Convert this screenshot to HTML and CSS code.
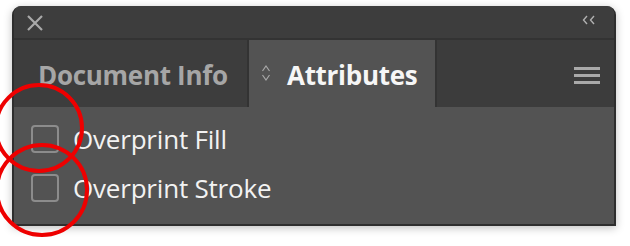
FILE: index.html
```html
<!DOCTYPE html>
<html lang="en">
<head>
    <meta charset="UTF-8">
    <title>Attributes Panel</title>
    <link rel="stylesheet" href="styles.css">
</head>
<body>
    <div class="panel">
        <div class="title-bar">
            <svg class="close-icon" width="16" height="16" viewBox="0 0 16 16">
                <path d="M1 1 L15 15 M15 1 L1 15" stroke="#a9a9a9" stroke-width="2.2" fill="none"/>
            </svg>
            <svg class="collapse-icon" width="14" height="10" viewBox="0 0 14 10">
                <path d="M5 1 L1.5 5 L5 9 M12 1 L8.5 5 L12 9" stroke="#b0b0b0" stroke-width="1.4" fill="none"/>
            </svg>
        </div>

        <div class="tab-row">
            <div class="tab">Document Info</div>
            <div class="tab active">
                <svg class="sort-icon" width="10" height="18" viewBox="0 0 10 18">
                    <path d="M1.5 7 L5 2 L8.5 7 M1.5 11 L5 16 L8.5 11" stroke="#a8a8a8" stroke-width="1.2" fill="none"/>
                </svg>
                Attributes
            </div>
            <div class="tab-spacer">
                <div class="menu-icon">
                    <span></span><span></span><span></span>
                </div>
            </div>
        </div>

        <div class="content">
            <label class="option"><span class="checkbox"></span>Overprint Fill</label>
            <label class="option"><span class="checkbox"></span>Overprint Stroke</label>
        </div>
    </div>

    <div class="mark mark-fill"></div>
    <div class="mark mark-stroke"></div>
</body>
</html>
```

FILE: styles.css
```css
body {
    margin: 0;
    padding: 6px 12px;
    background: #ffffff;
    font-family: "Open Sans", "Liberation Sans", sans-serif;
    position: relative;
    overflow: hidden;
    height: 246px;
    box-sizing: border-box;
}

.panel {
    width: 604px;
    height: 220px;
    background: #535353;
    border: 2px solid #2e2e2e;
    border-top: none;
    border-radius: 9px 9px 0 0;
    box-sizing: border-box;
    box-shadow: 0 2px 8px rgba(0, 0, 0, 0.25);
    overflow: hidden;
    display: flex;
    flex-direction: column;
}

.title-bar {
    height: 32px;
    background: #3d3d3d;
    border-bottom: 2px solid #333333;
    display: flex;
    align-items: center;
    justify-content: space-between;
    padding: 0 18px 0 13px;
    flex-shrink: 0;
}

.close-icon {
    margin-top: 2px;
}

.collapse-icon {
    margin-top: -4px;
}

.tab-row {
    height: 67px;
    display: flex;
    background: #3a3a3a;
    flex-shrink: 0;
}

.tab {
    display: flex;
    align-items: center;
    font-size: 26px;
    font-weight: 700;
    color: #a6a6a6;
    padding: 3px 10px 0 24px;
    width: 235px;
    box-sizing: border-box;
    background: #3d3d3d;
    border-right: 2px solid #333333;
    letter-spacing: -0.3px;
    white-space: nowrap;
}

.tab.active {
    width: 188px;
    background: #535353;
    color: #f6f6f6;
    border-right: 2px solid #333333;
    padding-left: 12px;
}

.sort-icon {
    margin-right: 16px;
    margin-top: -4px;
    flex-shrink: 0;
}

.tab-spacer {
    flex: 1;
    display: flex;
    align-items: center;
    justify-content: flex-end;
    padding-right: 14px;
    background: #3c3c3c;
}

.menu-icon {
    display: flex;
    flex-direction: column;
    gap: 4px;
    margin-top: 4px;
}

.menu-icon span {
    display: block;
    width: 26px;
    height: 3px;
    background: #a9a9a9;
}

.content {
    flex: 1;
    padding: 18px 0 0 17px;
    display: flex;
    flex-direction: column;
    gap: 21px;
}

.option {
    display: flex;
    align-items: center;
    font-size: 26px;
    color: #f2f2f2;
    height: 28px;
    letter-spacing: -0.2px;
}

.checkbox {
    width: 28px;
    height: 28px;
    box-sizing: border-box;
    border: 2px solid #8c8c8c;
    border-radius: 4px;
    margin-right: 14px;
    flex-shrink: 0;
}

.mark {
    position: absolute;
    width: 90px;
    height: 90px;
    border: 4px solid #ee0000;
    border-radius: 50%;
    box-sizing: border-box;
}

.mark-fill {
    left: -6px;
    top: 83px;
}

.mark-stroke {
    left: -5px;
    top: 143px;
    width: 94px;
    height: 94px;
}
```
